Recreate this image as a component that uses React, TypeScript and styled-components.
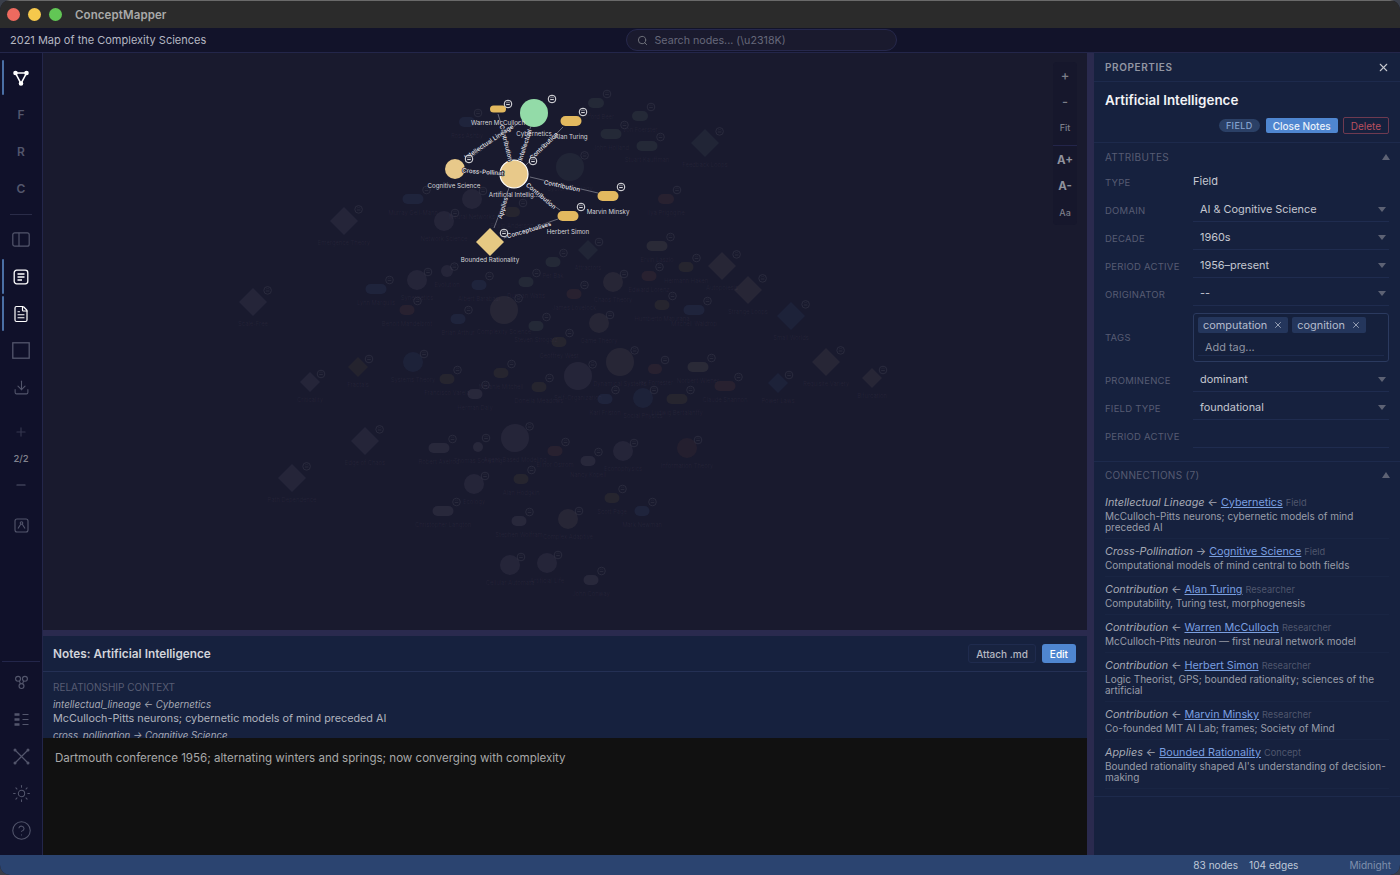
import React from 'react'
import styled, { createGlobalStyle } from 'styled-components'
import { CircleHelp, Download, FileText, Minus, Plus, Search, Sun, X } from 'lucide-react'

const GlobalStyle = createGlobalStyle`
  html, body {
    margin: 0;
    padding: 0;
    height: 100%;
    background: #3a3f4a;
    overflow: hidden;
  }
  * { box-sizing: border-box; }
`

const Window = styled.div`
  width: 1400px;
  height: 875px;
  display: flex;
  flex-direction: column;
  border-radius: 10px;
  overflow: hidden;
  background: #1a1a2e;
  font-family: Inter, "Noto Sans", sans-serif;
  color: #d5d8e0;
`

const TitleBar = styled.div`
  height: 28px;
  flex: none;
  display: flex;
  align-items: center;
  padding-left: 7px;
  gap: 8px;
  background: #2b2b2b;
  border-top: 1px solid #6a6a6a;
`

const Light = styled.span<{ $color: string }>`
  width: 13px;
  height: 13px;
  border-radius: 50%;
  background: ${({ $color }) => $color};
`

const AppName = styled.span`
  margin-left: 5px;
  font-size: 11.5px;
  font-weight: 600;
  letter-spacing: 0.1px;
  color: #a9a9a9;
`

const Header = styled.header`
  height: 25px;
  flex: none;
  position: relative;
  display: flex;
  align-items: center;
  justify-content: center;
  background: #12132a;
  border-bottom: 1px solid #23264a;
`

const DocTitle = styled.div`
  position: absolute;
  left: 10px;
  font-size: 11px;
  color: #b5b7c2;
`

const SearchBox = styled.div`
  width: 271px;
  height: 22px;
  margin-left: 122px;
  display: flex;
  align-items: center;
  gap: 7px;
  padding-left: 10px;
  border: 1px solid #26284c;
  border-radius: 11px;
  background: #1a1a2e;
  font-size: 10.7px;
  color: #66687a;
  svg { color: #74767f; }
`

const Body = styled.div`
  flex: 1;
  min-height: 0;
  display: flex;
`

const Rail = styled.nav`
  width: 43px;
  flex: none;
  display: flex;
  flex-direction: column;
  padding: 6px 0;
  background: #10112a;
  border-right: 1px solid #23264a;
`

const RailButton = styled.div<{ $active?: boolean; $bright?: boolean; $short?: boolean }>`
  position: relative;
  height: ${({ $short }) => ($short ? 27 : 37)}px;
  flex: none;
  display: flex;
  align-items: center;
  justify-content: center;
  font-size: 12px;
  font-weight: 600;
  color: ${({ $bright }) => ($bright ? '#ffffff' : '#53566c')};

  &::before {
    content: '';
    display: ${({ $active }) => ($active ? 'block' : 'none')};
    position: absolute;
    left: 2px;
    top: 1px;
    bottom: 1px;
    width: 2px;
    border-radius: 1px;
    background: #4a6fa5;
  }
`

const RailDivider = styled.div`
  height: 1px;
  flex: none;
  margin: 7px 10px 6px;
  background: #2a2c48;
`

const PageTools = styled.div`
  flex: none;
  margin: 12px 0 9px;
`

const PageCount = styled.div`
  height: 26px;
  display: flex;
  align-items: center;
  justify-content: center;
  font-size: 9.5px;
  font-weight: 500;
  color: #82848f;
`

const RailSpacer = styled.div`
  flex: 1;
`

const RailFoot = styled.div`
  border-top: 1px solid #23264a;
  margin: 0 2px;
  padding-top: 2px;
`

const Center = styled.main`
  flex: 1;
  min-width: 0;
  display: flex;
  flex-direction: column;
`

const Canvas = styled.section`
  position: relative;
  height: 577px;
  flex: none;
  background: #191a2e;
  overflow: hidden;
`

const GraphSvg = styled.svg`
  display: block;
  width: 100%;
  height: 100%;
  font-family: Inter, "Noto Sans", sans-serif;
`

const CanvasTools = styled.div`
  position: absolute;
  right: 10px;
  top: 9px;
  width: 24px;
  display: flex;
  flex-direction: column;
  background: #16172c;
  border-radius: 4px;
`

const ToolButton = styled.div<{ $big?: boolean; $sign?: boolean }>`
  height: 26px;
  display: flex;
  align-items: center;
  justify-content: center;
  font-size: ${({ $big, $sign }) => ($big ? 11.5 : $sign ? 13 : 9)}px;
  font-weight: ${({ $big }) => ($big ? 700 : 500)};
  color: ${({ $big }) => ($big ? '#8f919d' : '#7c7e8a')};
`

const ToolDivider = styled.div`
  height: 1px;
  margin: 5px 0 1px;
  background: #23254a;
`

const HSplit = styled.div`
  height: 6px;
  flex: none;
  background: #2a2a4e;
`

const VSplit = styled.div`
  width: 7px;
  flex: none;
  background: #2a2a4e;
`

const NotesHead = styled.div`
  height: 36px;
  flex: none;
  display: flex;
  align-items: center;
  gap: 6px;
  padding: 0 11px 0 10px;
  background: #16213e;
  border-bottom: 1px solid #243054;
`

const NotesTitle = styled.div`
  flex: 1;
  font-size: 11.8px;
  font-weight: 600;
  color: #d2d4da;
`

const GhostButton = styled.div`
  height: 19px;
  padding: 0 7px;
  display: flex;
  align-items: center;
  border-radius: 3px;
  background: #182340;
  border: 1px solid #1f2b4e;
  font-size: 10px;
  font-weight: 500;
  color: #b5b8c2;
`

const PrimaryButton = styled.div`
  height: 19px;
  padding: 0 8px;
  display: flex;
  align-items: center;
  border-radius: 3px;
  background: #4f86d0;
  font-size: 10px;
  font-weight: 500;
  color: #ffffff;
`

const Context = styled.div`
  height: 66px;
  flex: none;
  padding: 9px 10px 0;
  overflow: hidden;
  background: #16213e;
`

const ContextHeading = styled.div`
  font-size: 10px;
  line-height: 13px;
  color: #565c73;
  margin-bottom: 4px;
`

const ContextKey = styled.div`
  font-size: 9.7px;
  line-height: 14px;
  font-style: italic;
  color: #a7aab5;
`

const ContextText = styled.div`
  font-size: 10.8px;
  line-height: 14px;
  margin-bottom: 3px;
  color: #b0b3bd;
`

const Editor = styled.div`
  flex: 1;
  min-height: 0;
  padding: 13px 12px;
  background: #111111;
  font-size: 11.55px;
  line-height: 15px;
  color: #a8a8a8;
`

const Panel = styled.aside`
  width: 306px;
  flex: none;
  display: flex;
  flex-direction: column;
  background: #16213e;
`

const PanelHead = styled.div`
  height: 29px;
  flex: none;
  display: flex;
  align-items: center;
  justify-content: space-between;
  padding: 0 10px 0 11px;
  border-bottom: 1px solid #1d2a4c;
  font-size: 10px;
  font-weight: 600;
  letter-spacing: 0.6px;
  color: #9296a3;
  svg { color: #c4c6cd; }
`

const NodeHead = styled.div`
  height: 61px;
  flex: none;
  padding: 9px 11px 0;
  border-bottom: 1px solid #1d2a4c;
`

const NodeName = styled.div`
  font-size: 13.4px;
  line-height: 18px;
  font-weight: 600;
  color: #f2f3f6;
`

const NodeActions = styled.div`
  display: flex;
  justify-content: flex-end;
  align-items: center;
  gap: 5px;
  margin-top: 8px;
`

const TypeBadge = styled.span`
  height: 13px;
  padding: 0 7px;
  display: flex;
  align-items: center;
  margin-right: 1px;
  border-radius: 7px;
  background: #2b4066;
  font-size: 9px;
  font-weight: 500;
  letter-spacing: 0.4px;
  color: #84a2cf;
`

const CloseNotes = styled.div`
  height: 15px;
  padding: 0 7px;
  display: flex;
  align-items: center;
  border-radius: 2px;
  background: #4f86d0;
  font-size: 10px;
  font-weight: 500;
  color: #e9f0fa;
`

const DeleteButton = styled.div`
  height: 17px;
  padding: 0 7px;
  display: flex;
  align-items: center;
  border-radius: 2px;
  border: 1px solid #6e3a50;
  font-size: 10px;
  color: #b9505f;
`

const SectionHead = styled.div<{ $top?: number }>`
  height: ${({ $top }) => ($top ? 25 : 26)}px;
  display: flex;
  align-items: center;
  justify-content: space-between;
  padding: ${({ $top }) => $top ?? 0}px 10px 0 11px;
  font-size: 10px;
  letter-spacing: 0.3px;
  color: #565c73;
`

const SectionCaret = styled.span`
  width: 0;
  height: 0;
  border-left: 4px solid transparent;
  border-right: 4px solid transparent;
  border-bottom: 6px solid #5d6274;
`

const Attributes = styled.div`
  padding-bottom: 11px;
  border-bottom: 1px solid #1d2a4c;
`

const AttrRow = styled.div`
  display: flex;
  align-items: center;
  min-height: 28px;
  padding: 0 11px;
`

const AttrLabel = styled.div`
  width: 88px;
  flex: none;
  font-size: 9.5px;
  letter-spacing: 0.25px;
  color: #565c73;
`

const PlainValue = styled.div`
  margin-top: -2px;
  font-size: 11px;
  color: #c4c7d0;
`

const Select = styled.div`
  flex: 1;
  height: 24px;
  margin-top: -1px;
  display: flex;
  align-items: center;
  justify-content: space-between;
  padding: 0 3px 0 7px;
  border-bottom: 1px solid #1f2c4f;
  font-size: 10.9px;
  color: #c4c7d0;
`

const SelectCaret = styled.span`
  width: 0;
  height: 0;
  border-left: 4px solid transparent;
  border-right: 4px solid transparent;
  border-top: 5px solid #5d6274;
`

const TagBox = styled.div`
  flex: 1;
  height: 49px;
  margin: 5px 0 4px;
  padding: 3px 4px;
  border: 1px solid #2b3a5f;
  border-radius: 3px;
  background: #15203c;
`

const TagList = styled.div`
  display: flex;
  gap: 4px;
`

const Tag = styled.span`
  height: 16px;
  padding: 0 5px;
  display: flex;
  align-items: center;
  gap: 6px;
  border-radius: 2px;
  background: #24365c;
  font-size: 10.9px;
  color: #b4bccd;
  svg { color: #aab2c4; }
`

const AddTag = styled.div`
  height: 18px;
  margin-top: 5px;
  padding-left: 7px;
  display: flex;
  align-items: center;
  border-bottom: 1px solid #1d2a4c;
  font-size: 10.9px;
  color: #8f94a3;
`

const Connections = styled.div`
  padding-bottom: 7px;
  border-bottom: 1px solid #1d2a4c;
`

const ConnectionList = styled.div`
  padding: 2px 11px 0;
`

const Connection = styled.div`
  padding: 6px 0 5px;
  border-bottom: 1px solid #192543;
`

const ConnTitle = styled.div`
  display: flex;
  align-items: baseline;
  gap: 3px;
  line-height: 14px;
  margin-bottom: 1px;
  font-size: 10.8px;
  color: #a7aab5;
`

const ConnKind = styled.em`
  font-style: italic;
`

const ConnLink = styled.a`
  color: #7a9fe0;
  text-decoration: underline;
`

const ConnType = styled.span`
  font-size: 9.2px;
  color: #4f566d;
`

const ConnDesc = styled.div`
  font-size: 10px;
  line-height: 11px;
  color: #999da9;
`

const StatusBar = styled.footer`
  height: 20px;
  flex: none;
  display: flex;
  align-items: center;
  justify-content: flex-end;
  padding-right: 9px;
  background: #2b4470;
  font-size: 10.1px;
  color: #bfc8d8;
`

const StatusCount = styled.span<{ $gap: number }>`
  margin-right: ${({ $gap }) => $gap}px;
`

const StatusTheme = styled.span`
  color: #7f90ad;
`

const NodeLabel = styled.text<{ $faded?: boolean }>`
  font-size: ${({ $faded }) => ($faded ? 5.8 : 6.2)}px;
  text-anchor: middle;
  fill: ${({ $faded }) => ($faded ? '#7a6a80' : '#d6d6db')};
  fill-opacity: ${({ $faded }) => ($faded ? 0.1 : 1)};
`

const EdgeLabel = styled.text`
  font-size: 6.2px;
  font-weight: 500;
  text-anchor: middle;
  fill: #e4e4ea;
  stroke: #191a2e;
  stroke-width: 1.6px;
  paint-order: stroke;
`

const tones: Record<string, string> = {
  g: '#b8a98c',
  b: '#5278b5',
  r: '#a05848',
  o: '#96843c',
  t: '#7fa08c',
  p: '#a898b0',
}

type Shape = 'c' | 'd' | 'p'
type FadedNode = [Shape, number, number, number, string, string]

// shape, x, y, size, tone, label
const fadedNodes: FadedNode[] = [
  ['c', 570, 167, 14, 't', 'Systems Biology'],
  ['c', 472, 199, 10, 'p', 'Neural Networks'],
  ['c', 444, 221, 10, 'p', 'Network Science'],
  ['c', 417, 280, 10, 'p', 'Synergetics'],
  ['c', 447, 271, 6, 'p', 'Evolution'],
  ['c', 504, 310, 14, 'g', 'Complexity Science'],
  ['c', 613, 282, 10, 'g', 'Chaos Theory'],
  ['c', 599, 323, 10, 'g', 'Game Theory'],
  ['c', 413, 362, 10, 'b', 'Systems Theory'],
  ['c', 578, 376, 14, 'p', 'Self-Organization'],
  ['c', 620, 362, 14, 'g', 'Dynamical Systems'],
  ['c', 643, 398, 10, 'b', 'Social Physics'],
  ['c', 515, 438, 14, 'p', 'Agent-Based Modeling'],
  ['c', 623, 451, 10, 'p', 'Econophysics'],
  ['c', 687, 448, 10, 'r', 'Information Theory'],
  ['c', 474, 484, 10, 'p', 'Ecology'],
  ['c', 568, 519, 10, 'g', 'Complex Adaptive'],
  ['c', 510, 565, 10, 'p', 'Cellular Automata'],
  ['c', 547, 563, 10, 'p', 'Artificial Life'],
  ['d', 344, 221, 14, 'p', 'Emergence Theory'],
  ['d', 705, 143, 14, 't', 'Feedback Loops'],
  ['d', 588, 250, 10, 't', 'Attractors'],
  ['d', 253, 302, 14, 'p', 'Scale-Free'],
  ['d', 722, 266, 14, 'g', 'Autopoiesis'],
  ['d', 748, 290, 14, 'g', 'Strange Loops'],
  ['d', 791, 316, 14, 'b', 'Small Worlds'],
  ['d', 358, 367, 10, 'o', 'Fractals'],
  ['d', 310, 382, 10, 'p', 'Criticality'],
  ['d', 826, 362, 14, 'g', 'Requisite Variety'],
  ['d', 778, 383, 10, 'b', 'Power Laws'],
  ['d', 872, 378, 10, 'g', 'Bifurcation'],
  ['d', 365, 441, 14, 'p', 'Edge of Chaos'],
  ['d', 292, 478, 14, 'p', 'Path Dependence'],
  ['p', 467, 122, 16, 'b', 'Ross Ashby'],
  ['p', 596, 103, 16, 't', 'Stafford Beer'],
  ['p', 640, 116, 16, 't', 'Von Foerster'],
  ['p', 611, 134, 21, 't', 'John Holland'],
  ['p', 647, 146, 21, 't', 'Stuart Kauffman'],
  ['p', 413, 199, 21, 'b', 'Murray Gell-Mann'],
  ['p', 512, 212, 16, 'o', 'Philip Anderson'],
  ['p', 666, 199, 16, 'r', 'Ilya Prigogine'],
  ['p', 553, 262, 15, 't', 'Per Bak'],
  ['p', 657, 246, 21, 'g', 'Ervin Laszlo'],
  ['p', 686, 267, 15, 'o', 'Hermann Haken'],
  ['p', 649, 276, 15, 'r', 'Edward Lorenz'],
  ['p', 574, 294, 15, 'r', 'James Lovelock'],
  ['p', 662, 305, 15, 'o', 'Humberto Maturana'],
  ['p', 694, 310, 21, 'b', 'Mitchell Waldrop'],
  ['p', 376, 289, 21, 'b', 'Lynn Margulis'],
  ['p', 407, 310, 15, 'r', 'Benoit Mandelbrot'],
  ['p', 479, 285, 15, 'b', 'Albert Barabasi'],
  ['p', 526, 282, 15, 't', 'Duncan Watts'],
  ['p', 458, 319, 15, 'b', 'Brian Arthur'],
  ['p', 536, 326, 15, 't', 'Steven Strogatz'],
  ['p', 559, 342, 15, 'o', 'Geoffrey West'],
  ['p', 447, 379, 15, 'o', 'Francisco Varela'],
  ['p', 501, 373, 15, 'o', 'Melanie Mitchell'],
  ['p', 475, 394, 15, 'p', 'Herman Daly'],
  ['p', 539, 387, 15, 'o', 'Donella Meadows'],
  ['p', 655, 369, 14, 'r', 'Jay Forrester'],
  ['p', 698, 367, 21, 'g', 'Norbert Wiener'],
  ['p', 725, 386, 21, 'r', 'Claude Shannon'],
  ['p', 677, 399, 21, 'o', 'Ludwig Bertalanffy'],
  ['p', 605, 399, 15, 'b', 'Karl Friston'],
  ['p', 439, 448, 21, 'p', 'Robert Axelrod'],
  ['p', 478, 447, 10, 'p', 'Thomas Schelling'],
  ['p', 555, 451, 15, 'r', 'Elinor Ostrom'],
  ['p', 588, 461, 15, 'p', 'Nancy Kopell'],
  ['p', 521, 479, 15, 'o', 'Alan Hodgkin'],
  ['p', 612, 498, 15, 'o', 'Scott Page'],
  ['p', 642, 511, 15, 'b', 'Mark Newman'],
  ['p', 443, 511, 21, 'p', 'Christopher Langton'],
  ['p', 519, 521, 15, 'p', 'Stephen Wolfram'],
  ['p', 591, 580, 15, 'p', 'John Conway'],
]

function EyeMark({ x, y, dim }: { x: number; y: number; dim?: boolean }) {
  return (
    <g transform={`translate(${x} ${y})`} opacity={dim ? 0.08 : 1}>
      <circle r={3.8} fill="#191a2e" stroke="#ffffff" strokeWidth={0.9} />
      <path d="M-1.8 0.6h3.6" stroke="#ffffff" strokeWidth={0.9} />
      <path d="M-1.8 -1a2.2 2.2 0 0 1 3.6 0" stroke="#ffffff" strokeWidth={0.5} fill="none" />
    </g>
  )
}

function FadedGraphNode({ node }: { node: FadedNode }) {
  const [shape, x, y, size, tone, label] = node
  const fill = tones[tone]
  const bottom = shape === 'p' ? y + 16 : y + size + 10
  const eyeX = shape === 'p' ? x + size / 2 + 3 : x + size * 0.9 + 2
  const eyeY = shape === 'p' ? y - 9 : y - size * 0.9 + 1
  return (
    <g>
      {shape === 'c' && <circle cx={x} cy={y} r={size} fill={fill} opacity={0.09} />}
      {shape === 'd' && (
        <polygon
          points={`${x},${y - size} ${x + size},${y} ${x},${y + size} ${x - size},${y}`}
          fill={fill}
          opacity={0.09}
        />
      )}
      {shape === 'p' && (
        <rect x={x - size / 2} y={y - 5} width={size} height={10} rx={5} fill={fill} opacity={0.11} />
      )}
      <EyeMark x={eyeX} y={eyeY} dim />
      <NodeLabel $faded x={x} y={bottom}>
        {label}
      </NodeLabel>
    </g>
  )
}

const edges = [
  [498, 114, 512, 160],
  [531, 126, 519, 160],
  [563, 127, 525, 166],
  [464, 170, 500, 173],
  [598, 193, 530, 177],
  [560, 210, 526, 186],
  [494, 228, 509, 188],
  [504, 238, 558, 219],
  [520, 122, 465, 162],
]

const edgeLabels: [string, number, number, number][] = [
  ['Contribution', 506, 143, 76],
  ['Intellectual', 525, 145, -72],
  ['Contribution', 544, 146, -44],
  ['Cross-Pollinat', 483, 172, 4],
  ['Contribution', 562, 186, 12],
  ['Contribution', 541, 196, 40],
  ['Applies', 503, 208, -74],
  ['Conceptualises', 529, 230, -16],
  ['Intellectual Lineage', 489, 142, -34],
]

const Pill = ({ x, y, w }: { x: number; y: number; w: number }) => (
  <rect x={x - w / 2} y={y - 5} width={w} height={w > 18 ? 10 : 7} rx={w > 18 ? 5 : 3.5} fill="#e3b95f" />
)

function Graph() {
  return (
    <GraphSvg viewBox="43 53 1044 577">
      {fadedNodes.map((n) => (
        <FadedGraphNode key={n[5]} node={n} />
      ))}
      {edges.map((e, i) => (
        <line key={i} x1={e[0]} y1={e[1]} x2={e[2]} y2={e[3]} stroke="#8b8c99" strokeWidth={0.7} />
      ))}
      <circle cx={534} cy={113} r={14} fill="#93dba8" />
      <circle cx={514} cy={174} r={14} fill="#e8c98a" stroke="#ffffff" strokeWidth={1.2} />
      <circle cx={455} cy={169} r={10} fill="#e8c98a" />
      <polygon points="490,228 504,242 490,256 476,242" fill="#e6c983" />
      <Pill x={498} y={110.5} w={16} />
      <Pill x={571} y={121} w={21} />
      <Pill x={608} y={196} w={21} />
      <Pill x={568} y={216} w={21} />
      {edgeLabels.map(([text, x, y, angle], i) => (
        <EdgeLabel key={i} x={x} y={y} dy={2} transform={`rotate(${angle} ${x} ${y})`}>
          {text}
        </EdgeLabel>
      ))}
      <EyeMark x={508} y={104} />
      <EyeMark x={552} y={99} />
      <EyeMark x={583} y={112} />
      <EyeMark x={469} y={159} />
      <EyeMark x={533} y={161} />
      <EyeMark x={621} y={187} />
      <EyeMark x={581} y={207} />
      <EyeMark x={504} y={233} />
      <NodeLabel x={498} y={125}>Warren McCulloch</NodeLabel>
      <NodeLabel x={534} y={136}>Cybernetics</NodeLabel>
      <NodeLabel x={571} y={139}>Alan Turing</NodeLabel>
      <NodeLabel x={454} y={188}>Cognitive Science</NodeLabel>
      <NodeLabel x={514} y={197}>Artificial Intellig...</NodeLabel>
      <NodeLabel x={608} y={214}>Marvin Minsky</NodeLabel>
      <NodeLabel x={568} y={234}>Herbert Simon</NodeLabel>
      <NodeLabel x={490} y={262}>Bounded Rationality</NodeLabel>
    </GraphSvg>
  )
}

const GraphIcon = () => (
  <svg width="16" height="16" viewBox="0 0 16 16" fill="none" stroke="currentColor" strokeWidth="1.6">
    <path d="M2.5 3h11L8 13.5z" />
    <circle cx="2.5" cy="3" r="1.5" fill="currentColor" />
    <circle cx="13.5" cy="3" r="1.5" fill="currentColor" />
    <circle cx="8" cy="13.5" r="1.5" fill="currentColor" />
  </svg>
)

const SidePanelIcon = () => (
  <svg width="18" height="15" viewBox="0 0 18 15" fill="none" stroke="currentColor" strokeWidth="1.2">
    <rect x="0.8" y="0.8" width="16.4" height="13.4" rx="2" />
    <path d="M7 0.8v13.4" />
  </svg>
)

const NotesIcon = () => (
  <svg width="16" height="16" viewBox="0 0 16 16" fill="none" stroke="currentColor" strokeWidth="1.3">
    <rect x="1.2" y="1.2" width="13.6" height="13.6" rx="2.5" />
    <path d="M4.5 5h7M4.5 8h7M4.5 11h4.5" />
  </svg>
)

const FrameIcon = () => (
  <svg width="18" height="17" viewBox="0 0 18 17" fill="none" stroke="currentColor" strokeWidth="1.3">
    <rect x="0.8" y="0.8" width="16.4" height="15.4" />
  </svg>
)

const NetworkBoxIcon = () => (
  <svg width="15" height="15" viewBox="0 0 15 15" fill="none" stroke="currentColor" strokeWidth="1.1">
    <rect x="1" y="1" width="13" height="13" rx="2" />
    <circle cx="7.5" cy="5" r="1.3" />
    <path d="M6.7 6.2L4 10.5M8.3 6.2L11 10.5" />
  </svg>
)

const ClusterIcon = () => (
  <svg width="15" height="15" viewBox="0 0 14 14" fill="none" stroke="currentColor" strokeWidth="1.1">
    <circle cx="3.8" cy="3.5" r="2.3" />
    <circle cx="10.2" cy="3.5" r="2.3" />
    <circle cx="7" cy="10.3" r="2.3" />
    <path d="M5 5.5l1 2.8M9 5.5l-1 2.8" />
  </svg>
)

const ListIcon = () => (
  <svg width="17" height="17" viewBox="0 0 17 17" fill="none" stroke="currentColor" strokeWidth="1.2">
    <path d="M1.5 3.5h5M1.5 8.5h5M1.5 13.5h5" strokeWidth="2.4" />
    <path d="M9.5 3.5h6M9.5 8.5h6M9.5 13.5h6" />
  </svg>
)

const CrossNodesIcon = () => (
  <svg width="17" height="17" viewBox="0 0 17 17" fill="none" stroke="currentColor" strokeWidth="1.2">
    <path d="M2 2l13 13M15 2L2 15" />
    <circle cx="2" cy="2" r="0.9" fill="currentColor" />
    <circle cx="15" cy="2" r="0.9" fill="currentColor" />
    <circle cx="2" cy="15" r="0.9" fill="currentColor" />
    <circle cx="15" cy="15" r="0.9" fill="currentColor" />
  </svg>
)

const attributes = [
  ['DOMAIN', 'AI & Cognitive Science'],
  ['DECADE', '1960s'],
  ['PERIOD ACTIVE', '1956–present'],
  ['ORIGINATOR', '--'],
]

const connections = [
  ['Intellectual Lineage', '←', 'Cybernetics', 'Field', 'McCulloch-Pitts neurons; cybernetic models of mind preceded AI'],
  ['Cross-Pollination', '→', 'Cognitive Science', 'Field', 'Computational models of mind central to both fields'],
  ['Contribution', '←', 'Alan Turing', 'Researcher', 'Computability, Turing test, morphogenesis'],
  ['Contribution', '←', 'Warren McCulloch', 'Researcher', 'McCulloch-Pitts neuron — first neural network model'],
  ['Contribution', '←', 'Herbert Simon', 'Researcher', 'Logic Theorist, GPS; bounded rationality; sciences of the artificial'],
  ['Contribution', '←', 'Marvin Minsky', 'Researcher', 'Co-founded MIT AI Lab; frames; Society of Mind'],
  ['Applies', '←', 'Bounded Rationality', 'Concept', "Bounded rationality shaped AI's understanding of decision-making"],
]

export default function App() {
  return (
    <Window>
      <GlobalStyle />
      <TitleBar>
        <Light $color="#ee6a5f" />
        <Light $color="#f5c84c" />
        <Light $color="#62c655" />
        <AppName>ConceptMapper</AppName>
      </TitleBar>
      <Header>
        <DocTitle>2021 Map of the Complexity Sciences</DocTitle>
        <SearchBox>
          <Search size={11} />
          Search nodes... (\u2318K)
        </SearchBox>
      </Header>
      <Body>
        <Rail>
          <RailButton $active $bright><GraphIcon /></RailButton>
          <RailButton>F</RailButton>
          <RailButton>R</RailButton>
          <RailButton>C</RailButton>
          <RailDivider />
          <RailButton><SidePanelIcon /></RailButton>
          <RailButton $active $bright><NotesIcon /></RailButton>
          <RailButton $active $bright><FileText size={18} strokeWidth={1.6} /></RailButton>
          <RailButton><FrameIcon /></RailButton>
          <RailButton><Download size={17} strokeWidth={1.5} /></RailButton>
          <PageTools>
            <RailButton $short><Plus size={14} color="#34364e" /></RailButton>
            <PageCount>2/2</PageCount>
            <RailButton $short><Minus size={14} /></RailButton>
          </PageTools>
          <RailButton><NetworkBoxIcon /></RailButton>
          <RailSpacer />
          <RailFoot>
            <RailButton><ClusterIcon /></RailButton>
            <RailButton><ListIcon /></RailButton>
            <RailButton><CrossNodesIcon /></RailButton>
            <RailButton><Sun size={19} strokeWidth={1.3} /></RailButton>
            <RailButton><CircleHelp size={21} strokeWidth={1.2} /></RailButton>
          </RailFoot>
        </Rail>
        <Center>
          <Canvas>
            <Graph />
            <CanvasTools>
              <ToolButton $sign>+</ToolButton>
              <ToolButton $sign>-</ToolButton>
              <ToolButton>Fit</ToolButton>
              <ToolDivider />
              <ToolButton $big>A+</ToolButton>
              <ToolButton $big>A-</ToolButton>
              <ToolButton>Aa</ToolButton>
            </CanvasTools>
          </Canvas>
          <HSplit />
          <NotesHead>
            <NotesTitle>Notes: Artificial Intelligence</NotesTitle>
            <GhostButton>Attach .md</GhostButton>
            <PrimaryButton>Edit</PrimaryButton>
          </NotesHead>
          <Context>
            <ContextHeading>RELATIONSHIP CONTEXT</ContextHeading>
            <ContextKey>intellectual_lineage ← Cybernetics</ContextKey>
            <ContextText>McCulloch-Pitts neurons; cybernetic models of mind preceded AI</ContextText>
            <ContextKey>cross_pollination → Cognitive Science</ContextKey>
          </Context>
          <Editor>Dartmouth conference 1956; alternating winters and springs; now converging with complexity</Editor>
        </Center>
        <VSplit />
        <Panel>
          <PanelHead>
            PROPERTIES
            <X size={13} strokeWidth={2} />
          </PanelHead>
          <NodeHead>
            <NodeName>Artificial Intelligence</NodeName>
            <NodeActions>
              <TypeBadge>FIELD</TypeBadge>
              <CloseNotes>Close Notes</CloseNotes>
              <DeleteButton>Delete</DeleteButton>
            </NodeActions>
          </NodeHead>
          <Attributes>
            <SectionHead $top={2}>
              ATTRIBUTES
              <SectionCaret />
            </SectionHead>
            <AttrRow>
              <AttrLabel>TYPE</AttrLabel>
              <PlainValue>Field</PlainValue>
            </AttrRow>
            {attributes.map(([label, value]) => (
              <AttrRow key={label}>
                <AttrLabel>{label}</AttrLabel>
                <Select>
                  {value}
                  <SelectCaret />
                </Select>
              </AttrRow>
            ))}
            <AttrRow>
              <AttrLabel>TAGS</AttrLabel>
              <TagBox>
                <TagList>
                  <Tag>computation <X size={10} strokeWidth={2} /></Tag>
                  <Tag>cognition <X size={10} strokeWidth={2} /></Tag>
                </TagList>
                <AddTag>Add tag...</AddTag>
              </TagBox>
            </AttrRow>
            <AttrRow>
              <AttrLabel>PROMINENCE</AttrLabel>
              <Select>
                dominant
                <SelectCaret />
              </Select>
            </AttrRow>
            <AttrRow>
              <AttrLabel>FIELD TYPE</AttrLabel>
              <Select>
                foundational
                <SelectCaret />
              </Select>
            </AttrRow>
            <AttrRow>
              <AttrLabel>PERIOD ACTIVE</AttrLabel>
              <Select />
            </AttrRow>
          </Attributes>
          <Connections>
            <SectionHead>
              CONNECTIONS (7)
              <SectionCaret />
            </SectionHead>
            <ConnectionList>
              {connections.map(([kind, arrow, name, type, desc]) => (
                <Connection key={name}>
                  <ConnTitle>
                    <ConnKind>{kind}</ConnKind>
                    <span>{arrow}</span>
                    <ConnLink>{name}</ConnLink>
                    <ConnType>{type}</ConnType>
                  </ConnTitle>
                  <ConnDesc>{desc}</ConnDesc>
                </Connection>
              ))}
            </ConnectionList>
          </Connections>
        </Panel>
      </Body>
      <StatusBar>
        <StatusCount $gap={11}>83 nodes</StatusCount>
        <StatusCount $gap={51}>104 edges</StatusCount>
        <StatusTheme>Midnight</StatusTheme>
      </StatusBar>
    </Window>
  )
}
